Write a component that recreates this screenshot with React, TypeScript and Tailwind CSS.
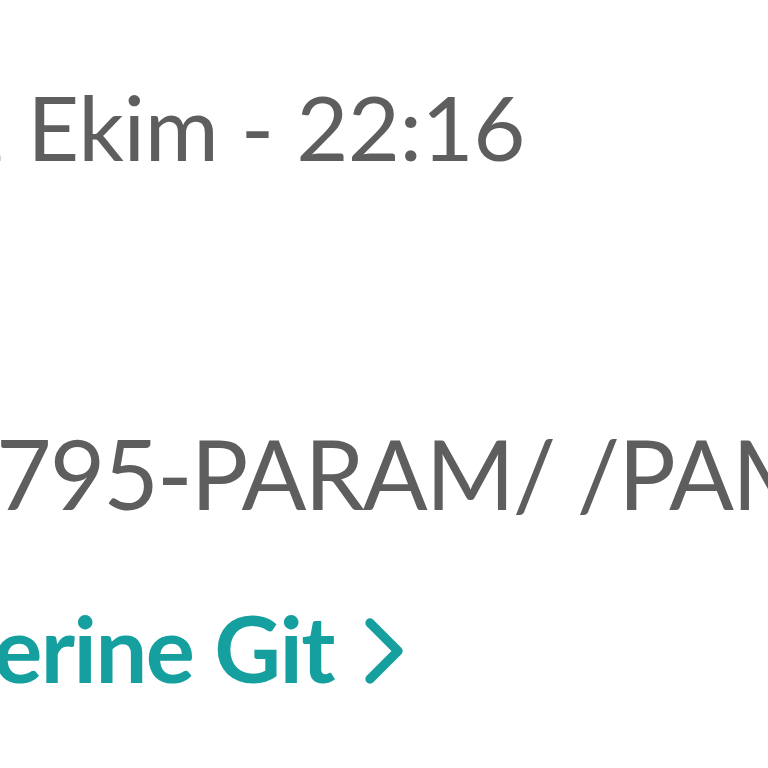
import { ChevronRight } from 'lucide-react';

export default function App() {
  return (
    <div className="w-[768px] h-[768px] bg-white overflow-hidden font-['Lato',sans-serif]">
      <div className="pt-[71px] whitespace-nowrap">
        <p className="-ml-[47px] text-[90px] leading-[110px] tracking-[-0.5px] text-[#5e5e5e]">2 Ekim - 22:16</p>
      </div>
      <div className="pt-[237px] whitespace-nowrap">
        <p className="-ml-[4px] text-[96px] leading-[110px] tracking-[-2px] text-[#5e5e5e]">795-PARAM/ /PAMUK</p>
      </div>
      <div className="pt-[61px] whitespace-nowrap flex items-center">
        <span className="-ml-[112px] text-[92px] leading-[110px] font-bold tracking-[-1.5px] text-[#169f9f]">Üzerine Git</span>
        <ChevronRight className="-ml-[6px] mt-[6px] text-[#169f9f]" size={112} strokeWidth={2} />
      </div>
    </div>
  );
}
